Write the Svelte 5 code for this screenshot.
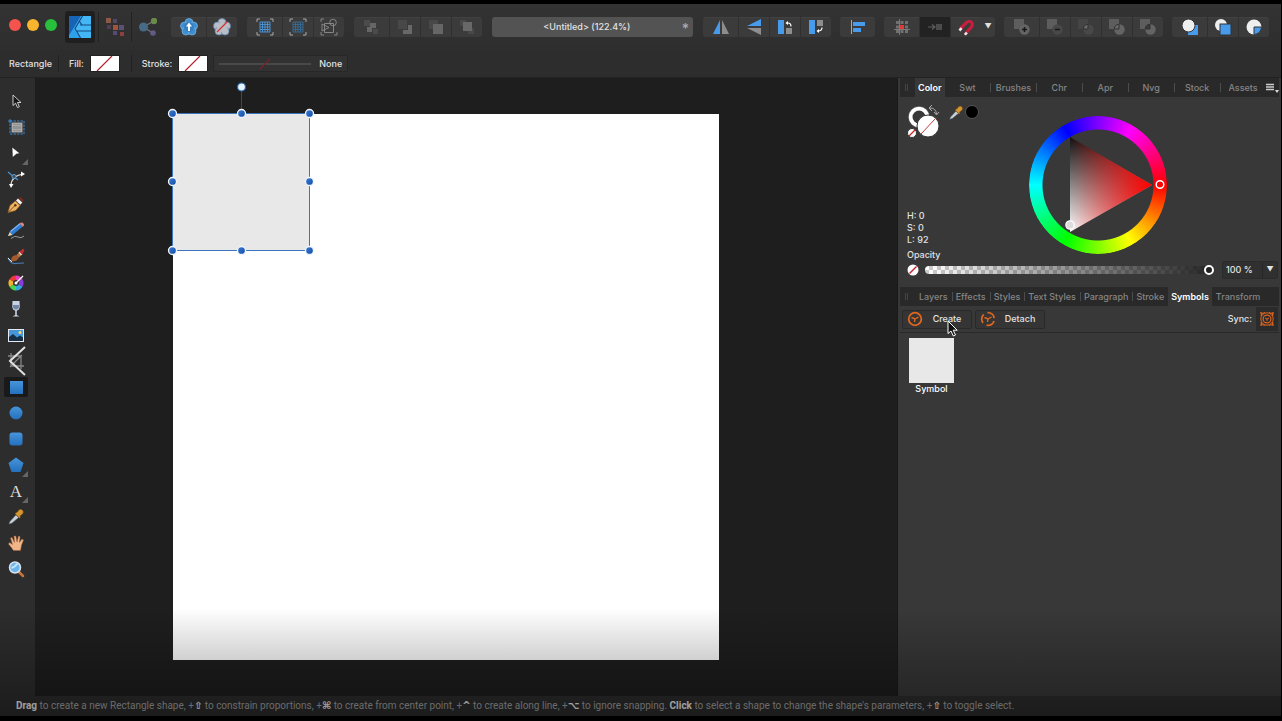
<script lang="ts">
  const personas = ['pixel', 'export'];
  const insertGroups = [
    ['flower', 'flower-off'],
    ['grid', 'grid-dim', 'shapes'],
    ['order-back', 'order-down', 'order-up', 'order-front']
  ];
  const flipGroup = ['flip-h', 'flip-v', 'rotate-left', 'rotate-right'];
  const booleanGroup = ['bool-add', 'bool-subtract', 'bool-intersect', 'bool-divide', 'bool-combine'];
  const insertionGroup = ['insert-behind', 'insert-front', 'insert-inside'];

  const tools = [
    'move', 'artboard', 'node', 'corner', 'pen', 'pencil', 'brush', 'fill', 'glass', 'place',
    'crop', 'rectangle', 'ellipse', 'rounded', 'polygon', 'text', 'picker', 'hand', 'zoom'
  ];
  const flyouts = ['node', 'polygon', 'text'];

  const colorTabs = ['Swt', 'Brushes', 'Chr', 'Apr', 'Nvg', 'Stock', 'Assets'];
  const layerTabs = ['Layers', 'Effects', 'Styles', 'Text Styles', 'Paragraph', 'Stroke', 'Symbols', 'Transform'];

  const handles = [
    [14, 35], [83, 35], [151, 35],
    [14, 103], [151, 103],
    [14, 172], [83, 172], [151, 172]
  ];

  let activeTool = $state('rectangle');
  let activeTab = $state('Symbols');
  let opacity = $state(100);
</script>

{#snippet icon(name: string)}
  <svg class="icon" viewBox="0 0 18 18" aria-hidden="true">
    {#if name === 'pixel'}
      <rect x="0" y="0" width="5" height="5" fill="#8a5a44" />
      <rect x="7" y="1" width="4" height="4" fill="#54496a" />
      <rect x="7" y="7" width="5" height="5" fill="#a3553c" />
      <rect x="1" y="7" width="4" height="4" fill="#4d3f4f" />
      <rect x="13" y="7" width="5" height="5" fill="#5c5078" />
      <rect x="7" y="13" width="4" height="4" fill="#554b78" />
      <rect x="14" y="14" width="4" height="4" fill="#8c3f3c" />
    {:else if name === 'export'}
      <path d="M4 9 15 3M4 9 14 15" stroke="#777" stroke-width="1.2" />
      <circle cx="4.500" cy="9" r="4.500" fill="#476a86" />
      <circle cx="15" cy="3" r="3.200" fill="#6b8a49" />
      <circle cx="14" cy="15" r="2.800" fill="#655a87" />
    {:else if name === 'flower' || name === 'flower-off'}
      <g fill={name === 'flower' ? '#3f8fd0' : '#b9bdc6'} stroke={name === 'flower' ? '#79b9ea' : '#5b88b5'} stroke-width=".7">
        <circle cx="9" cy="4.500" r="4" /><circle cx="4.500" cy="8" r="4" /><circle cx="13.500" cy="8" r="4" />
        <circle cx="6" cy="13" r="4" /><circle cx="12" cy="13" r="4" />
      </g>
      <circle cx="9" cy="9" r="5" fill={name === 'flower' ? '#3580c2' : '#b9bdc6'} />
      {#if name === 'flower'}
        <path d="M9 4.500 12 8.500H10V13H8V8.500H6z" fill="#fff" />
      {:else}
        <path d="M4 14 14 4" stroke="#d8322f" stroke-width="1.300" />
      {/if}
    {:else if name === 'grid' || name === 'grid-dim'}
      <path d="M1 4V1H4M14 1H17V4M17 14V17H14M4 17H1V14" fill="none" stroke="#aaa" />
      <path
        d="M4 4H14M4 6.500H14M4 9H14M4 11.500H14M4 14H14M4 4V14M6.500 4V14M9 4V14M11.500 4V14M14 4V14"
        stroke={name === 'grid' ? '#4a90cf' : '#39688f'}
      />
    {:else if name === 'shapes'}
      <g fill="none" stroke="#8c8c8c" stroke-width=".9">
        <path d="M1 4V1H4M17 14V17H14M4 17H1V14" />
        <circle cx="13" cy="4.500" r="3.300" />
        <path d="M4.500 5.500H13.500V14.500H4.500zM2 6 9 9.500 2 13z" />
      </g>
    {:else if name === 'order-back'}
      <rect x="1" y="2" width="6" height="6" fill="#4b4b4b" />
      <path d="M7 5H13V10H9V14H4V9H7z" fill="#666" />
      <rect x="10" y="11" width="5" height="5" fill="#4b4b4b" />
    {:else if name === 'order-down'}
      <rect x="2" y="2" width="9" height="9" fill="#484848" />
      <path d="M12 7H16V16H7V12H12z" fill="#686868" />
    {:else if name === 'order-up'}
      <rect x="2" y="2" width="9" height="9" fill="#484848" />
      <rect x="6" y="6" width="10" height="10" fill="#666" />
    {:else if name === 'order-front'}
      <rect x="2" y="2" width="6" height="6" fill="#484848" />
      <rect x="10" y="10" width="6" height="6" fill="#484848" />
      <rect x="5" y="4" width="9" height="9" fill="#686868" />
    {:else if name === 'flip-h'}
      <path d="M1 16 8 2V16z" fill="#479bea" /><path d="M10 2 17 16H10z" fill="#8d8d8d" />
    {:else if name === 'flip-v'}
      <path d="M2 8 16 1V8z" fill="#479bea" /><path d="M2 10H16V17z" fill="#8d8d8d" />
    {:else if name === 'rotate-left'}
      <rect x="2" y="2" width="6" height="14" fill="#479bea" /><rect x="10" y="10" width="6" height="6" fill="#8d8d8d" />
      <path d="M10.500 5H12Q15 5 15 8.500" fill="none" stroke="#fff" stroke-width="1.200" /><path d="M9.500 5 12 3V7z" fill="#fff" />
    {:else if name === 'rotate-right'}
      <rect x="2" y="2" width="6" height="14" fill="#479bea" /><rect x="10" y="2" width="6" height="6" fill="#8d8d8d" />
      <path d="M15 9.500Q15 13 11 13" fill="none" stroke="#fff" stroke-width="1.200" /><path d="M9.500 13 12 11V15z" fill="#fff" />
    {:else if name === 'align'}
      <rect x="2" y="2" width="1" height="14" fill="#aaa" />
      <rect x="4" y="4" width="12" height="4" fill="#479bea" /><rect x="4" y="10" width="8" height="4" fill="#479bea" />
    {:else if name === 'snap-grid'}
      <path d="M3 3h3v3H3zM7.500 3h3v3h-3zM12 3h3v3h-3zM3 7.500h3v3H3zM12 7.500h3v3h-3zM3 12h3v3H3zM7.500 12h3v3h-3zM12 12h3v3h-3z" fill="#707070" />
      <path d="M6.500 1V17M1 11.500H17" stroke="#888" stroke-width=".8" />
      <rect x="7" y="7" width="4" height="4" fill="#e03a36" />
    {:else if name === 'snap-move'}
      <path d="M2 9H8M6 6.500 9 9 6 11.500" fill="none" stroke="#5e5e5e" stroke-width="1.200" /><rect x="10" y="6" width="6" height="6" fill="#4b4b4b" />
    {:else if name === 'magnet'}
      <path d="M3 11 9.500 4.500Q12.500 2 14.500 4.500T13.500 10L8.500 15.500" fill="none" stroke="#c51f3d" stroke-width="3.200" />
      <path d="M1.500 11.500 3.800 9.200 5.500 11 3.300 13.400zM6.800 16 9 13.700 10.800 15.500 8.800 17.500z" fill="#f2e6e8" />
    {:else if name.startsWith('bool')}
      <rect x="1" y="1" width="10" height="10" fill={name === 'bool-intersect' ? '#454545' : '#5d5d5d'} />
      <circle cx="11.500" cy="11.500" r="5.200" fill={name === 'bool-subtract' || name === 'bool-intersect' ? '#484848' : '#646464'} />
      {#if name === 'bool-add'}
        <path d="M11.500 9V14M9 11.500H14" stroke="#181818" stroke-width="1.500" />
      {:else if name === 'bool-subtract'}
        <path d="M9 11.500H14" stroke="#181818" stroke-width="1.500" />
      {:else}
        <path d="M11 6.300V11H6.300A5 5 0 0 1 11 6.300z" fill={name === 'bool-combine' ? '#3a3a3a' : '#6a6a6a'} stroke="#303030" />
      {/if}
    {:else if name === 'insert-behind'}
      <rect x="7" y="7" width="10" height="10" fill="#479bea" /><circle cx="7.500" cy="7.500" r="6.500" fill="#eee" stroke="#333" />
    {:else if name === 'insert-front'}
      <circle cx="7" cy="7" r="6" fill="#eee" /><rect x="6" y="6" width="11" height="11" fill="#479bea" stroke="#333" />
    {:else if name === 'insert-inside'}
      <circle cx="9" cy="9" r="7.500" fill="#eee" /><path d="M9 9H16.500A7.500 7.500 0 0 1 9 16.500z" fill="#479bea" stroke="#333" />
    {:else if name === 'move'}
      <path d="M6 3V13.500L8.500 11.200 10.500 15.500 12.300 14.700 10.400 10.500H14z" fill="#161616" stroke="#ddd" stroke-width=".9" />
    {:else if name === 'artboard'}
      <rect x="3" y="3" width="14" height="13" fill="none" stroke="#3c87c9" stroke-dasharray="2.500 1" />
      <path d="M1 3H5M3 1V5" stroke="#3c87c9" />
      <rect x="5" y="5" width="10" height="9" fill="#939393" stroke="#c2c2c2" stroke-width=".8" /><path d="M5 7.500H15M5 11.500H15" stroke="#b8b8b8" stroke-width=".6" />
    {:else if name === 'node'}
      <path d="M5 3 13 9.500 9.500 10 5.500 13.500z" fill="#fff" stroke="#111" stroke-width=".5" />
    {:else if name === 'corner'}
      <path d="M4 16Q4 6 16 4" fill="none" stroke="#ddd" stroke-width="1.200" />
      <path d="M1 2 7 7 5.500 9M7 7 11 10" fill="none" stroke="#4b96d8" stroke-width="1.200" />
      <path d="M14 1.500 18 4 14 6.500zM2 14H6.500L4 18z" fill="#fff" /><circle cx="7" cy="6.500" r="2" fill="#4a4a4a" stroke="#58a4e0" />
    {:else if name === 'pen'}
      <path d="M1 16.500 3 9.500 8.500 5 13 9.500 8.500 14.500z" fill="#f0b35f" stroke="#a36326" stroke-width=".6" />
      <path d="M9 4.500 11 2.500 15.300 6.500 13.300 8.700z" fill="#eee" /><path d="M11.500 2 13.500 1 17 4.300 15.500 6z" fill="#7b2a1a" />
      <path d="M1.500 16 8 9.500" stroke="#5b3214" stroke-width=".8" /><circle cx="8.300" cy="9.300" r="1.200" fill="#5b3214" />
    {:else if name === 'pencil'}
      <path d="M1 14 3 9.500 12.500 1.500 15.500 4.800 5.500 13z" fill="#2f7cd2" /><path d="M3.500 9.500 13 1.700" stroke="#7bb8f2" stroke-width="1.200" />
      <path d="M12.500 1.500Q15-.5 16.500 1.500T15.500 4.800z" fill="#d9857d" /><path d="M1 14 2.800 10 5.300 13z" fill="#eed0a0" />
      <path d="M4 16.500Q8 13 11 15T17 14" fill="none" stroke="#999" />
    {:else if name === 'brush'}
      <path d="M1 10Q4 16 8 15.500T17 15" fill="none" stroke="#4a7fb5" stroke-width="1.200" /><path d="M1 10 5 14" stroke="#eee" />
      <path d="M4 13Q4 7 9.500 7L12 9.500Q10 14 4 13z" fill="#a35a2d" /><path d="M9.500 7 12.500 4 15 6.500 12 9.500z" fill="#b5763f" /><path d="M11.500 4.500 13 3.500 15.500 6 14 7.500z" fill="#ddd" /><path d="M12.500 4 16 .5 17.500 2.500 15 6.500z" fill="#c82b2e" />
    {:else if name === 'fill'}
      <path d="M9 9 9 1.500A7.500 7.500 0 0 1 15.500 5.300z" fill="#e83fc0" /><path d="M9 9 15.500 5.300A7.500 7.500 0 0 1 15.500 12.800z" fill="#8a3be0" />
      <path d="M9 9 15.500 12.800A7.500 7.500 0 0 1 9 16.500z" fill="#30a9e2" /><path d="M9 9V16.500A7.500 7.500 0 0 1 2.500 12.800z" fill="#4dd44c" />
      <path d="M9 9 2.500 12.800A7.500 7.500 0 0 1 2.500 5.300z" fill="#f2b32c" /><path d="M9 9 2.500 5.300A7.500 7.500 0 0 1 9 1.500z" fill="#ed3c35" />
      <circle cx="9" cy="9" r="3" fill="#303030" /><path d="M9 9 16 2" stroke="#fff" stroke-width="1.200" /><circle cx="9" cy="9" r="1.500" fill="#fff" />
    {:else if name === 'glass'}
      <path d="M5.500 1H12.500L12.800 7Q12 10.500 9.800 10.500V15L12.500 16.500H5.500L8.200 15V10.500Q6 10.500 5.200 7z" fill="#c9d2e3" /><path d="M6 5H12L12.200 7Q11.500 9.500 9 9.500T5.800 7z" fill="#7486a6" />
    {:else if name === 'place'}
      <rect x="1" y="3" width="16" height="13" fill="#e6eaf0" /><rect x="2" y="4" width="14" height="11" fill="#4597dc" />
      <circle cx="13" cy="6.500" r="1.500" fill="#ffd66b" /><path d="M2 11 6 8 10 11.500 13 9.500 16 11.500V15H2z" fill="#162f45" />
    {:else if name === 'crop'}
      <path d="M4 1V14H17M1 4H14V17M3 15 15 3" fill="none" stroke="#858585" stroke-width="1.300" />
    {:else if name === 'rectangle'}
      <rect x="3" y="3" width="13" height="13" fill="url(#tool-blue)" />
    {:else if name === 'ellipse'}
      <circle cx="9" cy="9" r="6.500" fill="url(#tool-blue)" />
    {:else if name === 'rounded'}
      <rect x="2.500" y="2.500" width="13" height="13" rx="3" fill="url(#tool-blue)" />
    {:else if name === 'polygon'}
      <path d="M9 1.500 16.500 7 13.500 16H4.500L1.500 7z" fill="url(#tool-blue)" />
    {:else if name === 'text'}
      <text x="9" y="15" text-anchor="middle" class="letter">A</text>
    {:else if name === 'picker'}
      <path d="M2 16 3 13.500 9 7 11.500 9.500 5 15z" fill="#c9d3dc" stroke="#68737c" stroke-width=".5" />
      <path d="M8 5.500 12.500 10.200 13.500 9 12.800 8.200 16 5.500Q17 2.500 14.500 1.500T10.500 4L9.500 4.500z" fill="#d5962f" stroke="#7b4b14" stroke-width=".5" />
    {:else if name === 'hand'}
      <path d="M6.500 16.500Q4.500 13.500 1.500 10L2.500 8.500 5.500 10.500 3.500 4 5 3.500 7.500 8.500 7 2H8.800L10 8 11.500 2 13 2.500 12.500 8.500 15 5 16.500 6Q14 11 13.500 16.500z" fill="#f0b68a" stroke="#a15f38" stroke-width=".5" />
    {:else if name === 'zoom'}
      <path d="M11.500 11.500 16 16" stroke="#c7743a" stroke-width="2.500" stroke-linecap="round" /><circle cx="8" cy="7.500" r="5.500" fill="#6db5eb" stroke="#d8e4ed" stroke-width="1.500" />
      <path d="M4.500 8Q8 7 10.500 3.500" stroke="#c7e7fb" stroke-width="2" fill="none" />
    {/if}
  </svg>
{/snippet}

{#snippet group(names: string[])}
  <div class="group">
    {#each names as name}
      <button class="tb" aria-label={name}>{@render icon(name)}</button>
    {/each}
  </div>
{/snippet}

{#snippet symbolMark(kind: string)}
  <svg class="mark" viewBox="0 0 16 16" fill="none" stroke="#df661f" aria-hidden="true">
    {#if kind === 'sync'}
      <path d="M2 5Q3 3 1.500 1.500 4 3 6 1.500M10 1.500Q12 3 14.500 1.500 13 3 14 5M14 11Q13 13 14.500 14.500 12 13 10 14.500M6 14.500Q4 13 1.500 14.500 3 13 2 11" stroke-width="1.200" />
      <circle cx="8" cy="8" r="6.200" /><circle cx="8" cy="8" r="3.900" stroke-width="1.200" />
      <path d="M6 7 8 8 10 7M8 8V10" />
    {:else}
      <circle cx="8" cy="8" r="6.300" stroke-width="1.800" stroke-dasharray={kind === 'detach' ? '9.200 4' : 'none'} stroke-dashoffset={kind === 'detach' ? 11.200 : 0} />
      <path d="M4.500 6.500 8 8 11.500 6M8 8 7.500 11" stroke-width="1.400" />
    {/if}
  </svg>
{/snippet}

<div class="window">
  <svg class="defs" aria-hidden="true">
    <defs>
      <linearGradient id="tool-blue" x2="0" y2="1"><stop stop-color="#4795dc" /><stop offset="1" stop-color="#2470bd" /></linearGradient>
    </defs>
  </svg>

  <header class="titlebar">
    <div class="lights">
      <button class="light red" aria-label="Close"></button>
      <button class="light yellow" aria-label="Minimise"></button>
      <button class="light green" aria-label="Zoom window"></button>
    </div>
    <div class="personas">
      <button class="persona current" aria-label="Designer">
        <svg class="logo" viewBox="0 0 22 22" aria-hidden="true">
          <rect width="22" height="22" fill="#43b6f5" />
          <path d="M0 0H12L0 20z" fill="#1764b6" />
          <path d="M12 0 4.500 12.500 10.500 22H0V19.500L12 0z" fill="#2da0ec" />
          <path d="M13.500 0 6 12.500 11.500 22M11 9H22M8 15H22M10.500 5.500 13 9" fill="none" stroke="#144a80" stroke-width="1.200" />
        </svg>
      </button>
      {#each personas as name}
        <span class="rule"></span>
        <button class="persona" aria-label={name}>{@render icon(name)}</button>
      {/each}
    </div>
    {#each insertGroups as names}
      {@render group(names)}
    {/each}
    <div class="document">
      <span class="name">&lt;Untitled&gt; (122.4%)</span>
      <span class="dirty">*</span>
    </div>
    <div class="cluster">
      {@render group(flipGroup)}
      {@render group(['align'])}
      <div class="group">
        <button class="tb" aria-label="Show grid">{@render icon('snap-grid')}</button>
        <button class="tb pressed" aria-label="Move by whole pixels">{@render icon('snap-move')}</button>
        <button class="tb" aria-label="Snapping">{@render icon('magnet')}</button>
        <button class="more" aria-label="Snapping options">▼</button>
      </div>
      {@render group(booleanGroup)}
      {@render group(insertionGroup)}
    </div>
  </header>

  <div class="context">
    <span class="shape">Rectangle</span>
    <span class="rule"></span>
    <span class="label">Fill:</span>
    <button class="swatch" aria-label="Fill colour"><svg viewBox="0 0 28 15"><path d="M6 15 21 0" stroke="#b3202a" stroke-width="1.200" /></svg></button>
    <span class="rule wide"></span>
    <span class="label">Stroke:</span>
    <button class="swatch" aria-label="Stroke colour"><svg viewBox="0 0 28 15"><path d="M6 15 21 0" stroke="#b3202a" stroke-width="1.200" /></svg></button>
    <button class="stroke-style">
      <svg viewBox="0 0 92 10"><path d="M0 5H92" stroke="#606060" /><path d="M41 10 51 0" stroke="#7c2228" stroke-width="1.200" /></svg>
      None
    </button>
  </div>

  <main class="workspace">
    <nav class="tools" aria-label="Tools">
      {#each tools as name}
        <button class="tool" class:active={name === activeTool} aria-label={name} onclick={() => (activeTool = name)}>
          {@render icon(name)}
          {#if flyouts.includes(name)}<span class="flyout"></span>{/if}
          {#if name === 'crop'}
            <svg class="chevron" viewBox="0 0 20 32"><path d="M18 2 3 16 18 30" fill="none" stroke="#e0e0e0" stroke-width="2" /></svg>
          {/if}
        </button>
      {/each}
    </nav>

    <section class="canvas">
      <div class="artboard">
        <div class="rectangle"></div>
        <svg class="selection" viewBox="0 0 166 187" aria-hidden="true">
          <defs>
            <linearGradient id="handle" x2="1" y2="1"><stop stop-color="#3f7fd6" /><stop offset="1" stop-color="#0f4aa5" /></linearGradient>
          </defs>
          <path d="M83.500 9V35" stroke="#1c4d8c" />
          <path d="M14.500 35.500H151.500V172.500H14.500z" fill="none" stroke="#3a75bd" />
          {#each handles as [x, y]}
            <circle cx={x + 0.5} cy={y + 0.5} r="4" fill="url(#handle)" stroke="#f4f7fb" stroke-width="1.300" />
          {/each}
          <circle cx="83.500" cy="9" r="4" fill="#e4f3ff" stroke="#2465ae" stroke-width="1.200" />
        </svg>
      </div>
    </section>

    <aside class="studio">
      <div class="tabs color-tabs">
        <span class="grip"></span>
        <button class="tab on">Color</button>
        {#each colorTabs as tab}
          <button class="tab">{tab}</button>
        {/each}
        <button class="menu" aria-label="Panel menu">
          <svg viewBox="0 0 13 10"><path d="M0 1.500H8M0 4H8M0 6.500H8" stroke="#ccc" stroke-width="1.500" /><path d="M9 7H13L11 10z" fill="#ddd" /></svg>
        </button>
      </div>

      <div class="color">
        <div class="color-top">
          <div class="readout">
            <div class="wells">
              <svg class="pair" viewBox="0 0 33 34" aria-label="Stroke and fill" role="img">
                <circle cx="12" cy="12" r="8.500" fill="none" stroke="#fff" stroke-width="4" />
                <circle cx="12" cy="12" r="10.700" fill="none" stroke="#555" stroke-width=".6" />
                <circle cx="21" cy="21" r="11" fill="#fff" stroke="#333" />
                <path d="M14 29 28 14" stroke="#c8383c" />
                <circle cx="5" cy="28" r="4.500" fill="#fff" stroke="#333" /><path d="M2 31 8 25" stroke="#c22" stroke-width="1.300" />
                <path d="M23 3Q29 3 29.500 9M25 0 22 3 25 6M27 7 29.500 10 32 7" fill="none" stroke="#aaa" />
              </svg>
              <button class="picker" aria-label="Colour picker">{@render icon('picker')}</button>
              <span class="picked"></span>
            </div>
            <div class="hsl">
              <span>H: 0</span>
              <span>S: 0</span>
              <span>L: 92</span>
            </div>
          </div>
          <div class="wheel">
            <div class="ring"></div>
            <svg class="triangle" viewBox="0 0 138 138" aria-hidden="true">
              <defs>
                <linearGradient id="grays" x2="0" y2="1"><stop stop-color="#111" /><stop offset="1" stop-color="#fff" /></linearGradient>
                <linearGradient id="reds"><stop stop-color="#f00" stop-opacity="0" /><stop offset="1" stop-color="#f00" /></linearGradient>
              </defs>
              <path d="M41 21 123 69 41 116z" fill="url(#grays)" />
              <path d="M41 21 123 69 41 116z" fill="url(#reds)" />
              <circle cx="131" cy="68.500" r="3.800" fill="none" stroke="#fff" stroke-width="1.500" />
              <circle cx="41" cy="109" r="4.200" fill="#ddd" stroke="#fff" stroke-width="1.200" />
            </svg>
          </div>
        </div>
        <label class="opacity-label" for="opacity">Opacity</label>
        <div class="opacity">
          <svg class="none" viewBox="0 0 12 12"><circle cx="6" cy="6" r="5.500" fill="#fff" /><path d="M2.500 9.500 9.500 2.500" stroke="#c4242b" stroke-width="1.500" /></svg>
          <input id="opacity" type="range" min="0" max="100" bind:value={opacity} />
          <div class="combo">
            <input type="text" aria-label="Opacity value" value={`${opacity} %`} />
            <button aria-label="Opacity presets">▼</button>
          </div>
        </div>
      </div>

      <div class="tabs layer-tabs">
        <span class="grip"></span>
        {#each layerTabs as tab}
          <button class="tab" class:on={tab === activeTab} onclick={() => (activeTab = tab)}>{tab}</button>
        {/each}
      </div>

      <div class="symbol-bar">
        <button class="action">{@render symbolMark('create')}<span>Create</span></button>
        <button class="action">{@render symbolMark('detach')}<span>Detach</span></button>
        <label class="sync-label" for="sync">Sync:</label>
        <button class="sync" id="sync">{@render symbolMark('sync')}</button>
        <svg class="cursor" viewBox="0 0 11 17" aria-hidden="true">
          <path d="M1 1V13.500L4 11 6.300 16 8.500 15 6.200 10.200H10.200z" fill="#111" stroke="#fff" stroke-width="1" />
        </svg>
      </div>

      <div class="symbols">
        <figure>
          <div class="thumb"></div>
          <figcaption>Symbol</figcaption>
        </figure>
      </div>
    </aside>
  </main>

  <footer class="status">
    <b>Drag</b> to create a new Rectangle shape, +<kbd>⇧</kbd> to constrain proportions, +<kbd>⌘</kbd> to create from center point, +<kbd>^</kbd> to create along line, +<kbd>⌥</kbd> to ignore snapping. <b>Click</b> to select a shape to change the shape's parameters, +<kbd>⇧</kbd> to toggle select.
  </footer>
</div>

<style>
  :global(body) {
    background: #000;
  }

  .window {
    position: relative;
    box-sizing: border-box;
    display: flex;
    flex-direction: column;
    min-height: 100vh;
    border: solid #000;
    border-width: 4px 1px 5px 0;
    background: #2d2d2d;
    color: #e2e2e2;
    font: 500 9px/12px Inter, "Liberation Sans", sans-serif;
    overflow: hidden;
  }

  /* shade along the bottom edge of the window */
  .window::after {
    content: "";
    position: absolute;
    inset: auto 0 0;
    height: 108px;
    background: linear-gradient(transparent, rgba(0, 0, 0, 0.38));
    pointer-events: none;
  }

  button,
  input {
    margin: 0;
    padding: 0;
    border: 0;
    background: none;
    color: inherit;
    font: inherit;
  }

  svg {
    display: block;
  }

  .defs {
    position: absolute;
    width: 0;
    height: 0;
  }

  .icon {
    width: 18px;
    height: 18px;
  }

  .letter {
    font: 17px "Liberation Serif", serif;
    fill: #ddd;
  }

  .titlebar {
    display: flex;
    align-items: center;
    gap: 10px;
    height: 46px;
    padding: 0 12px 0 9px;
    background: linear-gradient(#333, #2e2e2e);
  }

  .lights {
    display: flex;
    gap: 6px;
    padding-bottom: 4px;
  }

  .light {
    width: 12px;
    height: 12px;
    border-radius: 50%;
  }

  .red { background: #f4544d; }
  .yellow { background: #f9b42d; }
  .green { background: #28bf3c; }

  .personas {
    display: flex;
    align-items: center;
    gap: 3px;
    margin-left: -2px;
  }

  .persona {
    display: grid;
    place-items: center;
    width: 26px;
    height: 32px;
    border-radius: 3px;
  }

  .persona.current {
    width: 30px;
    background: #1f1f1f;
  }

  .logo {
    width: 22px;
    height: 22px;
  }

  .rule {
    width: 1px;
    height: 30px;
    background: #222;
  }

  .group {
    display: flex;
    height: 20px;
    border-radius: 3px;
    background: #3b3b3b;
    overflow: hidden;
  }

  .tb {
    display: grid;
    place-items: center;
    width: 31px;
    height: 20px;
    box-shadow: inset 0 1px #414141;
  }

  .tb:first-child {
    width: 35px;
  }

  .tb + .tb {
    border-left: 1px solid #303030;
  }

  .tb.pressed {
    background: #222;
    box-shadow: none;
  }

  .more {
    width: 14px;
    font-size: 7px;
  }

  .document {
    display: flex;
    flex: 1;
    align-items: center;
    height: 20px;
    padding: 0 4px 0 0;
    border-radius: 3px;
    background: #535353;
  }

  .name {
    flex: 1;
    text-align: center;
  }

  .dirty {
    height: 12px;
    color: #aaa;
    font-size: 14px;
    line-height: 16px;
  }

  .cluster {
    display: flex;
    gap: 9px;
  }

  .context {
    display: flex;
    align-items: center;
    height: 28px;
    padding-left: 9px;
    border-bottom: 1px solid #222;
    box-sizing: border-box;
  }

  .context .rule {
    height: 17px;
    margin: 0 10px 0 6px;
  }

  .context .rule.wide {
    margin: 0 10px 0 11px;
  }

  .label {
    margin-right: 6px;
  }

  .swatch {
    width: 30px;
    height: 17px;
    border: 1px solid #222;
    background: #fff;
  }

  .stroke-style {
    display: flex;
    align-items: center;
    gap: 8px;
    height: 17px;
    margin-left: 5px;
    padding: 0 5px;
    border: 1px solid #272727;
    border-radius: 2px;
    background: #323232;
  }

  .stroke-style svg {
    width: 92px;
    height: 10px;
  }

  .workspace {
    display: flex;
    flex: 1;
  }

  .tools {
    display: flex;
    flex-direction: column;
    gap: 6px;
    box-sizing: border-box;
    width: 35px;
    padding: 13px 0 0 4px;
  }

  .tool {
    position: relative;
    display: grid;
    place-items: center;
    width: 24px;
    height: 20px;
    border-radius: 2px;
  }

  .tool.active {
    background: #191919;
  }

  .flyout {
    position: absolute;
    right: 0;
    bottom: -2px;
    border: 3px solid;
    border-color: transparent #666 #666 transparent;
  }

  .chevron {
    position: absolute;
    left: 3px;
    top: -6px;
    width: 20px;
    height: 32px;
  }

  .canvas {
    position: relative;
    flex: 1;
    background: #1e1e1e;
  }

  .artboard {
    position: absolute;
    left: 138px;
    top: 36px;
    width: 546px;
    height: 546px;
    background: #fff;
  }

  .rectangle {
    width: 137px;
    height: 137px;
    background: #e8e8e8;
  }

  .selection {
    position: absolute;
    left: -15px;
    top: -36px;
    width: 166px;
    height: 187px;
  }

  .studio {
    box-sizing: border-box;
    width: 384px;
    padding: 0 2px;
    border-left: 1px solid #191919;
    background: #383838;
  }

  .tabs {
    display: flex;
    height: 19px;
    background: #292929;
    color: #858585;
    white-space: nowrap;
  }

  .grip {
    width: 3px;
    height: 7px;
    margin: 6px 7px 0 5px;
    border: solid #444;
    border-width: 0 1px;
    box-sizing: border-box;
  }

  .tab {
    position: relative;
    padding: 0 4px;
  }

  .tab.on {
    padding: 0 3px;
    background: #383838;
    color: #fff;
    font-weight: 600;
  }

  .color-tabs .tab:not(.on) {
    flex: 1;
  }

  .tab:not(.on) + .tab:not(.on)::before {
    content: "";
    position: absolute;
    left: 0;
    top: 5px;
    width: 1px;
    height: 9px;
    background: #4c4c4c;
  }

  .menu svg {
    width: 13px;
    height: 10px;
  }

  .color {
    padding: 8px 0 8px 7px;
  }

  .color-top {
    display: flex;
    height: 144px;
  }

  .readout {
    display: flex;
    flex-direction: column;
    justify-content: space-between;
    box-sizing: border-box;
    width: 122px;
    padding-bottom: 3px;
  }

  .wells {
    display: flex;
    align-items: flex-start;
  }

  .pair {
    width: 33px;
    height: 34px;
  }

  .picker {
    margin-left: 8px;
  }

  .picker .icon {
    width: 16px;
    height: 16px;
  }

  .picked {
    width: 14px;
    height: 14px;
    margin-left: 1px;
    border: 1px solid #555;
    border-radius: 50%;
    background: #000;
    box-sizing: border-box;
  }

  .hsl {
    display: flex;
    flex-direction: column;
  }

  .wheel {
    position: relative;
    width: 138px;
    height: 138px;
    margin-top: 11px;
  }

  .ring {
    height: 138px;
    border-radius: 50%;
    background: conic-gradient(from 90deg, #f00, #ff0, #0f0, #0ff, #00f, #f0f, #f00);
    mask: radial-gradient(circle, transparent 55px, #000 56px);
  }

  .triangle {
    position: absolute;
    inset: 0;
  }

  .opacity-label {
    display: block;
  }

  .opacity {
    display: flex;
    align-items: center;
    height: 18px;
  }

  .none {
    width: 12px;
    height: 12px;
  }

  #opacity {
    flex: 1;
    height: 8px;
    margin: 0 8px 0 6px;
    border-radius: 4px;
    appearance: none;
    background:
      linear-gradient(90deg, transparent, rgba(26, 26, 26, 0.95)),
      conic-gradient(#ccc 25%, #fff 0 50%, #ccc 0 75%, #fff 0) 0 0 / 8px 8px;
  }

  #opacity::-webkit-slider-thumb {
    width: 10px;
    height: 10px;
    border: 2px solid #fff;
    border-radius: 50%;
    appearance: none;
    background: #222;
  }

  .combo {
    display: flex;
    height: 18px;
    margin-right: 1px;
    border: 1px solid #2b2b2b;
    border-radius: 2px;
    background: #303030;
    box-sizing: border-box;
  }

  .combo input {
    width: 39px;
    padding-left: 3px;
    box-sizing: border-box;
  }

  .combo button {
    width: 15px;
    border-left: 1px solid #262626;
    font-size: 7px;
  }

  .symbol-bar {
    position: relative;
    display: flex;
    align-items: center;
    gap: 3px;
    height: 26px;
    padding: 0 1px 0 2px;
    border-bottom: 1px solid #292929;
  }

  .action {
    display: flex;
    align-items: center;
    box-sizing: border-box;
    width: 70px;
    height: 19px;
    padding-left: 4px;
    border: 1px solid #292929;
    border-radius: 2px;
    background: #353535;
  }

  .action span {
    flex: 1;
  }

  .mark {
    width: 16px;
    height: 16px;
  }

  .sync-label {
    margin: 0 4px 0 auto;
  }

  .sync {
    display: grid;
    place-items: center;
    width: 22px;
    height: 24px;
    background: #2b2b2b;
  }

  .sync-label + .sync {
    margin-left: -3px;
  }

  .cursor {
    position: absolute;
    left: 47px;
    top: 14px;
    width: 11px;
    height: 17px;
  }

  .symbols {
    display: flex;
    padding: 5px 9px;
  }

  figure {
    width: 45px;
    margin: 0;
    text-align: center;
    color: #fff;
  }

  .thumb {
    height: 45px;
    background: #e8e8e8;
  }

  .status {
    height: 20px;
    padding-left: 16px;
    color: #a2a2a2;
    font: 400 10px/19px Roboto, "Liberation Sans", sans-serif;
    white-space: nowrap;
  }

  .status b,
  kbd {
    color: #f0f0f0;
    font-weight: 700;
  }

  kbd {
    font-family: "DejaVu Sans", sans-serif;
    font-size: 10px;
  }
</style>
